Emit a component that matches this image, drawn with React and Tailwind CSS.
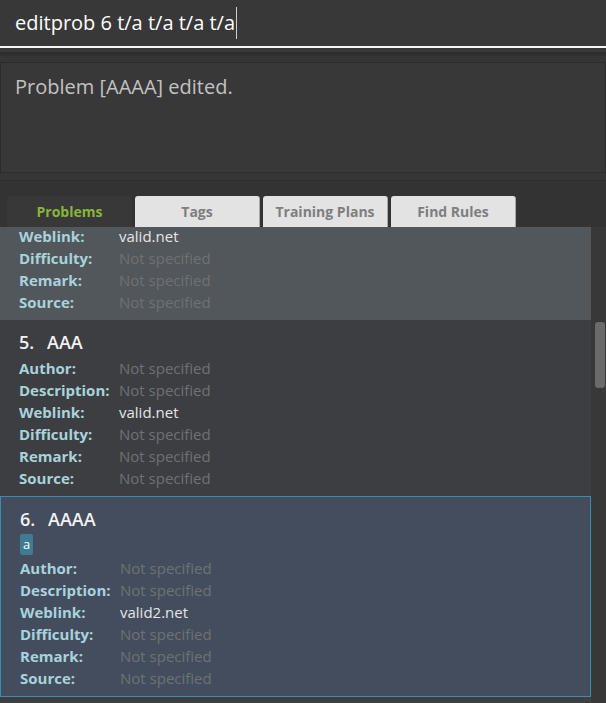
import React from "react";

const F = { fontFamily: '"Open Sans", "Noto Sans", sans-serif' };

function Row({ label, value, strong }) {
  return (
    <div className="flex h-[22px] items-center text-[15px] leading-[22px]">
      <span className="w-[100px] shrink-0 font-bold text-[#a9d3dc]">{label}</span>
      <span className={strong ? "text-[#e6e6e6]" : "text-[#6e7275]"}>{value}</span>
    </div>
  );
}

function Rows({ weblink }) {
  return (
    <>
      <Row label="Author:" value="Not specified" />
      <Row label="Description:" value="Not specified" />
      <Row label="Weblink:" value={weblink} strong />
      <Row label="Difficulty:" value="Not specified" />
      <Row label="Remark:" value="Not specified" />
      <Row label="Source:" value="Not specified" />
    </>
  );
}

function Title({ n, name }) {
  return (
    <div className="flex h-[26px] items-center text-[18px] font-semibold text-[#f2f2f2]">
      <span className="w-[28px]">{n}.</span>
      <span>{name}</span>
    </div>
  );
}

export default function App() {
  return (
    <div style={F} className="relative h-[703px] w-[606px] overflow-hidden bg-[#333333]">
      {/* command box */}
      <div className="flex h-[46px] items-center bg-[#383838] pl-[15px] text-[20px] text-white">
        <span>editprob 6 t/a t/a t/a t/a</span>
        <span className="ml-[1px] h-[32px] w-[1px] bg-[#cfcfcf]" />
      </div>
      <div className="h-[2px] bg-[#f5f5f5]" />
      <div className="h-[4px] bg-[#383838]" />
      <div className="h-[4px] bg-[#2f2f2f]" />
      <div className="h-[6px] bg-[#353535]" />
      {/* result box */}
      <div className="h-[111px] border border-[#2b2b2b] bg-[#383838] pl-[14px] pt-[9px] text-[20px] text-[#c2c2c2]">
        Problem [AAAA] edited.
      </div>
      <div className="h-[7px] bg-[#363636]" />
      <div className="h-[1px] bg-[#2c2c2c]" />
      <div className="h-[15px] bg-[#333333]" />
      {/* tabs */}
      <div className="flex h-[31px] items-stretch gap-[3px] pl-[7px]">
        <div className="flex w-[125px] items-center justify-center rounded-t-[3px] bg-[#383838] text-[14px] font-bold text-[#8bb43a]">
          Problems
        </div>
        {["Tags", "Training Plans", "Find Rules"].map((t) => (
          <div
            key={t}
            className="flex w-[125px] items-center justify-center rounded-t-[3px] border-r border-[#a8a8a8] bg-[#e3e3e3] text-[14px] font-bold text-[#7e7e7e]"
          >
            {t}
          </div>
        ))}
      </div>
      {/* list */}
      <div className="flex h-[477px]">
        <div className="w-[591px] overflow-hidden bg-[#3c3e41]">
          <div className="h-[93px] overflow-hidden bg-[#51575b] pl-[19px]">
            <div className="mt-[-2px]">
              <Row label="Weblink:" value="valid.net" strong />
              <Row label="Difficulty:" value="Not specified" />
              <Row label="Remark:" value="Not specified" />
              <Row label="Source:" value="Not specified" />
            </div>
          </div>
          <div className="h-[176px] bg-[#3c3e41] pb-[7px] pl-[19px] pt-[9px]">
            <Title n="5" name="AAA" />
            <div className="h-[2px]" />
            <Rows weblink="valid.net" />
          </div>
          <div className="h-[201px] border border-[#3a8db2] bg-[#434d5e] pl-[19px] pt-[9px]">
            <Title n="6" name="AAAA" />
            <div className="flex h-[25px] items-center">
              <span className="flex h-[21px] items-center rounded-[2px] bg-[#3f7b92] px-[3px] text-[13px] leading-none text-white">
                a
              </span>
            </div>
            <Rows weblink="valid2.net" />
          </div>
        </div>
        <div className="relative w-[15px] bg-[#383838]">
          <div className="absolute left-[4px] top-[95px] h-[66px] w-[10px] rounded-[3px] bg-[#6a6a6a]" />
        </div>
      </div>
    </div>
  );
}
